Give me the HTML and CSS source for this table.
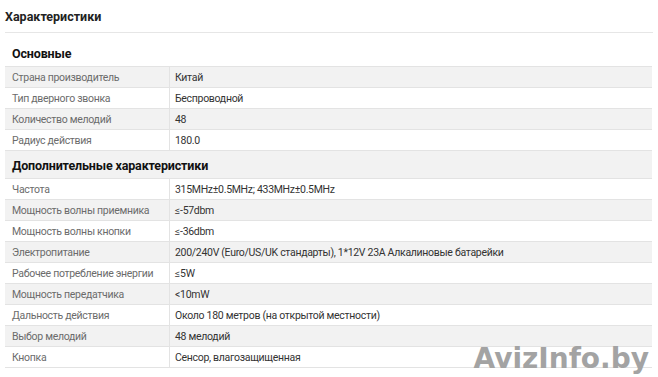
FILE: index.html
```html
<!DOCTYPE html>
<html lang="ru">
<head>
<meta charset="utf-8">
<link rel="stylesheet" href="styles.css">
</head>
<body>
<div class="page">
  <div class="title">Характеристики</div>
  <div class="specs">
    <div class="group">Основные</div>
    <div class="row"><div class="k">Страна производитель</div><div class="v">Китай</div></div>
    <div class="row"><div class="k">Тип дверного звонка</div><div class="v">Беспроводной</div></div>
    <div class="row"><div class="k">Количество мелодий</div><div class="v">48</div></div>
    <div class="row"><div class="k">Радиус действия</div><div class="v">180.0</div></div>
    <div class="group">Дополнительные характеристики</div>
    <div class="row"><div class="k">Частота</div><div class="v">315MHz±0.5MHz; 433MHz±0.5MHz</div></div>
    <div class="row"><div class="k">Мощность волны приемника</div><div class="v">≤-57dbm</div></div>
    <div class="row"><div class="k">Мощность волны кнопки</div><div class="v">≤-36dbm</div></div>
    <div class="row"><div class="k">Электропитание</div><div class="v">200/240V (Euro/US/UK стандарты), 1*12V 23A Алкалиновые батарейки</div></div>
    <div class="row"><div class="k">Рабочее потребление энергии</div><div class="v">≤5W</div></div>
    <div class="row"><div class="k">Мощность передатчика</div><div class="v">&lt;10mW</div></div>
    <div class="row"><div class="k">Дальность действия</div><div class="v">Около 180 метров (на открытой местности)</div></div>
    <div class="row"><div class="k">Выбор мелодий</div><div class="v">48 мелодий</div></div>
    <div class="row"><div class="k">Кнопка</div><div class="v">Сенсор, влагозащищенная</div></div>
  </div>
  <div class="watermark">AvizInfo.by</div>
</div>
</body>
</html>
```
FILE: styles.css
```css
html, body {
  margin: 0;
  padding: 0;
  background: #fff;
}
.page {
  position: relative;
  width: 658px;
  height: 377px;
  overflow: hidden;
  padding: 0 6px 0 5px;
  box-sizing: border-box;
  font-family: Roboto, "Liberation Sans", sans-serif;
}
.title {
  height: 32px;
  line-height: 34px;
  font-size: 12.5px;
  font-weight: bold;
  color: #222;
  border-bottom: 1px solid #e6e6e6;
  margin-right: -1px;
}
.specs {
  margin-top: 6px;
  display: flex;
  flex-direction: column;
}
.specs > :nth-child(even) {
  background: #f2f2f2;
}
.group {
  height: 28px;
  line-height: 29px;
  padding-left: 7px;
  font-size: 12.5px;
  font-weight: bold;
  letter-spacing: -0.15px;
  color: #111;
  border-bottom: 1px solid #e3e3e3;
  box-sizing: border-box;
}
.row {
  display: grid;
  grid-template-columns: 165px 1fr;
  height: 21px;
  border-bottom: 1px solid #e3e3e3;
  box-sizing: border-box;
  font-size: 10.5px;
  letter-spacing: -0.3px;
  line-height: 21px;
}
.k {
  padding-left: 7px;
  color: #6b6b6b;
  border-right: 1px solid #e3e3e3;
}
.v {
  padding-left: 5px;
  color: #333;
}
.watermark {
  position: absolute;
  right: 9px;
  bottom: 2px;
  font-family: "DejaVu Sans", sans-serif;
  font-weight: bold;
  font-size: 28px;
  color: #a3a3a3;
  letter-spacing: 0;
}
```
